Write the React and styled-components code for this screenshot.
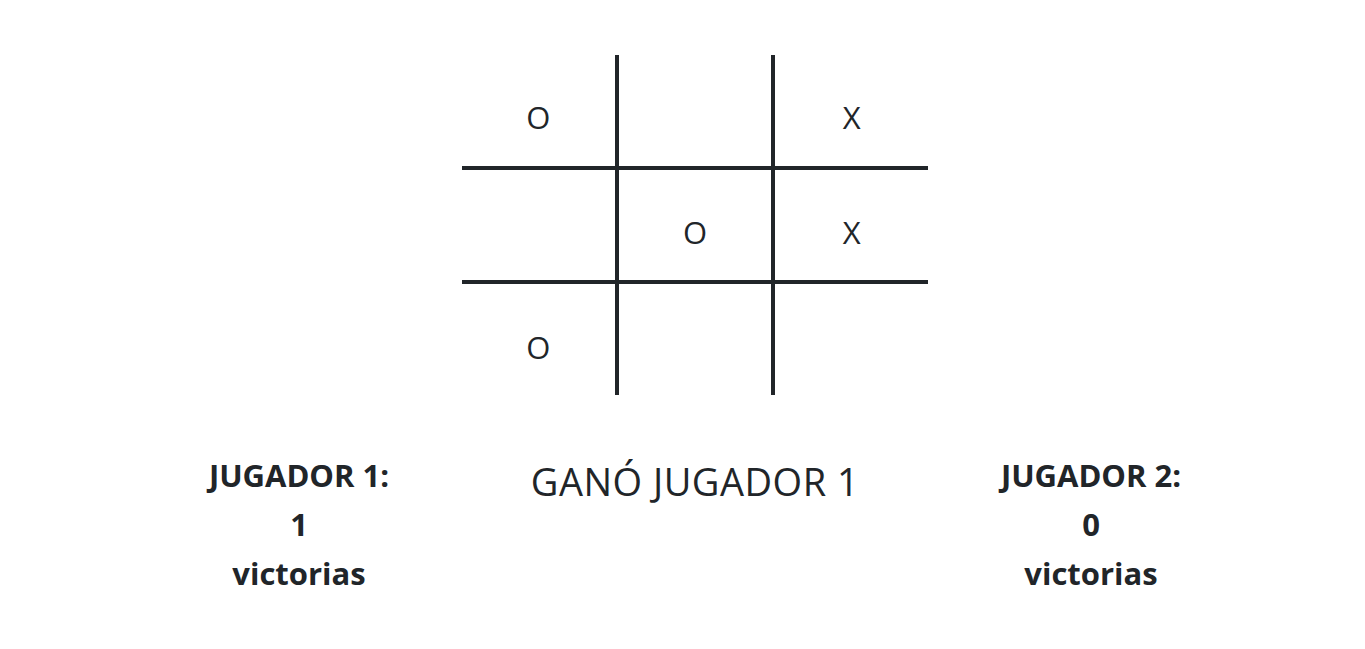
import React from "react";
import styled, { createGlobalStyle } from "styled-components";

const board = ["O", "", "X", "", "O", "X", "O", "", ""];

const GlobalStyle = createGlobalStyle`
  body {
    margin: 0;
    background: #fff;
    color: #212529;
    font-family: "Open Sans", "Noto Sans", sans-serif;
  }
`;

const App = () => (
  <>
    <GlobalStyle />
    <Page>
      <BoardArea>
        <Board>
          {board.map((mark, i) => (
            <Cell key={i}>{mark}</Cell>
          ))}
        </Board>
      </BoardArea>
      <ScoreRow>
        <Score>
          JUGADOR 1:
          <br />1<br />
          victorias
        </Score>
        <Result>GANÓ JUGADOR 1</Result>
        <Score>
          JUGADOR 2:
          <br />0<br />
          victorias
        </Score>
      </ScoreRow>
    </Page>
  </>
);

const Page = styled.div`
  padding: 55px 76px 0 101px;
`;

const BoardArea = styled.div`
  display: flex;
  justify-content: center;
`;

const Board = styled.div`
  display: grid;
  grid-template-columns: repeat(3, 1fr);
  grid-template-rows: repeat(3, 1fr);
  gap: 4px;
  width: 466px;
  height: 340px;
  background: #212529;
`;

const Cell = styled.div`
  background: #fff;
  display: flex;
  align-items: center;
  justify-content: center;
  padding-top: 14px;
  font-size: 31px;
`;

const ScoreRow = styled.div`
  display: grid;
  grid-template-columns: repeat(3, minmax(0, 1fr));
  margin-top: 56px;
`;

const Score = styled.div`
  text-align: center;
  font-weight: 700;
  font-size: 31px;
  line-height: 49px;
`;

const Result = styled.div`
  text-align: center;
  font-size: 38px;
  letter-spacing: 0.5px;
  line-height: 49px;
  padding-top: 6px;
`;

export default App;
